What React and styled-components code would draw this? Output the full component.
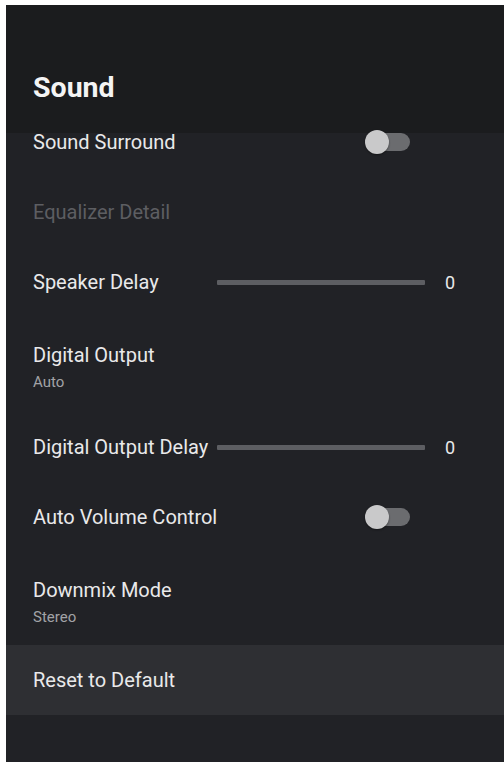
import React from "react";
import styled, { createGlobalStyle } from "styled-components";

const GlobalStyle = createGlobalStyle`
  html, body {
    margin: 0;
    padding: 0;
    background: #ffffff;
  }
  body {
    padding: 5px 0 0 6px;
    font-family: Roboto, "Noto Sans", "Liberation Sans", sans-serif;
  }
`;

const Screen = styled.div`
  width: 498px;
  height: 757px;
  background-color: #212226;
  display: flex;
  flex-direction: column;
  overflow: hidden;
`;

const Header = styled.div`
  height: 128px;
  flex-shrink: 0;
  background-color: #1b1c1e;
  display: flex;
  align-items: flex-end;
  padding: 0 0 29px 27px;
  box-sizing: border-box;
`;

const Title = styled.h1`
  margin: 0;
  font-size: 28.5px;
  font-weight: 700;
  color: #f4f4f4;
  line-height: 32px;
`;

const List = styled.div`
  display: flex;
  flex-direction: column;
`;

const Row = styled.div`
  height: ${(p) => p.height}px;
  padding: ${(p) => (p.twoLine ? "25px" : "0")} 0 0 27px;
  box-sizing: border-box;
  display: flex;
  flex-direction: ${(p) => (p.twoLine ? "column" : "row")};
  align-items: ${(p) => (p.twoLine || p.top ? "flex-start" : "center")};
  background-color: ${(p) => (p.focused ? "#2e2f33" : "transparent")};
`;

const Label = styled.div`
  font-size: 20px;
  line-height: ${(p) => (p.compact ? "18px" : "26px")};
  color: ${(p) => (p.disabled ? "#5d5e62" : "#e9e9ea")};
  width: ${(p) => (p.fixed ? "184px" : "332px")};
  white-space: nowrap;
  flex-shrink: 0;
`;

const Sub = styled.div`
  font-size: 15px;
  line-height: 20px;
  margin-top: 4px;
  color: #a2a3a6;
`;

const Toggle = styled.div`
  position: relative;
  width: 44px;
  height: 18px;
  margin-left: 1px;
  border-radius: 9px;
  background-color: #6b6c6f;
`;

const Thumb = styled.div`
  position: absolute;
  left: -1px;
  top: -3px;
  width: 24px;
  height: 24px;
  border-radius: 50%;
  background-color: #c9c9ca;
  box-shadow: 0 1px 2px rgba(0, 0, 0, 0.4);
`;

const Track = styled.div`
  width: 208px;
  height: 5px;
  background-color: #5d5e62;
  border-radius: 1px;
`;

const Value = styled.div`
  font-size: 18px;
  color: #e9e9ea;
  margin-left: 20px;
`;

const Switch = () => (
  <Toggle>
    <Thumb />
  </Toggle>
);

const Slider = ({ label, value }) => (
  <Row height={70}>
    <Label fixed>{label}</Label>
    <Track />
    <Value>{value}</Value>
  </Row>
);

const App = () => {
  return (
    <>
      <GlobalStyle />
      <Screen>
        <Header>
          <Title>Sound</Title>
        </Header>
        <List>
          <Row height={44} top>
            <Label compact>Sound Surround</Label>
            <Switch />
          </Row>
          <Row height={70}>
            <Label disabled>Equalizer Detail</Label>
          </Row>
          <Slider label="Speaker Delay" value="0" />
          <Row height={95} twoLine>
            <Label>Digital Output</Label>
            <Sub>Auto</Sub>
          </Row>
          <Slider label="Digital Output Delay" value="0" />
          <Row height={70}>
            <Label>Auto Volume Control</Label>
            <Switch />
          </Row>
          <Row height={93} twoLine>
            <Label>Downmix Mode</Label>
            <Sub>Stereo</Sub>
          </Row>
          <Row height={70} focused>
            <Label>Reset to Default</Label>
          </Row>
        </List>
      </Screen>
    </>
  );
};

export default App;
